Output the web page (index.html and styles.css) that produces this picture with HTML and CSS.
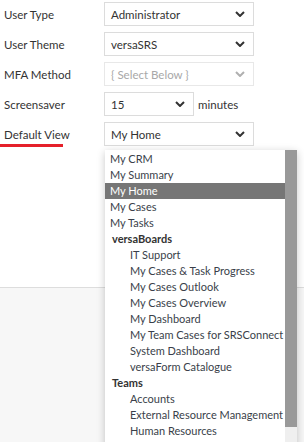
FILE: index.html
```html
<!DOCTYPE html>
<html lang="en">
<head>
  <meta charset="UTF-8">
  <meta name="viewport" content="width=device-width, initial-scale=1.0">
  <title>User Settings</title>
  <link rel="stylesheet" href="styles.css">
</head>
<body>
  <div class="panel">
    <div class="row">
      <label class="lbl">User Type</label>
      <div class="sel">Administrator<svg class="chev" viewBox="0 0 10 6"><path d="M1 1l4 4 4-4"/></svg></div>
    </div>
    <div class="row">
      <label class="lbl">User Theme</label>
      <div class="sel">versaSRS<svg class="chev" viewBox="0 0 10 6"><path d="M1 1l4 4 4-4"/></svg></div>
    </div>
    <div class="row">
      <label class="lbl">MFA Method</label>
      <div class="sel off">{ Select Below }<svg class="chev" viewBox="0 0 10 6"><path d="M1 1l4 4 4-4"/></svg></div>
    </div>
    <div class="row">
      <label class="lbl">Screensaver</label>
      <div class="sel short">15<svg class="chev" viewBox="0 0 10 6"><path d="M1 1l4 4 4-4"/></svg></div>
      <span class="unit">minutes</span>
    </div>
    <div class="row">
      <label class="lbl active">Default View</label>
      <div class="sel">My Home<svg class="chev" viewBox="0 0 10 6"><path d="M1 1l4 4 4-4"/></svg></div>
    </div>
  </div>

  <div class="dropdown">
    <ul class="opts">
      <li>My CRM</li>
      <li>My Summary</li>
      <li class="hl">My Home</li>
      <li>My Cases</li>
      <li>My Tasks</li>
      <li class="grp">versaBoards</li>
      <li class="sub">IT Support</li>
      <li class="sub">My Cases &amp; Task Progress</li>
      <li class="sub">My Cases Outlook</li>
      <li class="sub">My Cases Overview</li>
      <li class="sub">My Dashboard</li>
      <li class="sub">My Team Cases for SRSConnect</li>
      <li class="sub">System Dashboard</li>
      <li class="sub">versaForm Catalogue</li>
      <li class="grp">Teams</li>
      <li class="sub">Accounts</li>
      <li class="sub">External Resource Management</li>
      <li class="sub">Human Resources</li>
    </ul>
    <div class="bar"><div class="thumb"></div></div>
  </div>
</body>
</html>
```

FILE: styles.css
```css
* {
  padding: 0;
  margin: 0;
  box-sizing: border-box;
}
body {
  width: 304px;
  height: 442px;
  overflow: hidden;
  background-color: #F7F7F7;
  font-family: Lato, "Open Sans", sans-serif;
  font-size: 11px;
  color: #333;
  position: relative;
}
.panel {
  height: 288px;
  background-color: #fff;
  border-bottom: 1px solid #DDD;
  padding-top: 2px;
  display: flex;
  flex-direction: column;
  gap: 6px;
}
.row {
  display: flex;
  align-items: center;
  height: 24px;
}
.lbl {
  width: 104px;
  padding-left: 4px;
  font-size: 11.5px;
  position: relative;
}
.lbl.active::after {
  content: "";
  position: absolute;
  left: 0;
  width: 63px;
  bottom: -6px;
  height: 3px;
  background-color: #E5202A;
}
.sel {
  width: 150px;
  height: 24px;
  border: 1px solid #DCDCDC;
  padding: 0 6px;
  display: flex;
  align-items: center;
  justify-content: space-between;
  font-size: 11.5px;
  color: #333;
}
.sel.off {
  border-color: #E8E8E8;
  color: #A8A8A8;
}
.sel.short {
  width: 90px;
}
.chev {
  width: 10px;
  height: 6px;
  fill: none;
  stroke: #333;
  stroke-width: 2;
  margin-right: 2px;
}
.off .chev {
  stroke: #B0B0B0;
}
.unit {
  margin-left: 4px;
  font-size: 11.5px;
}
.dropdown {
  position: absolute;
  left: 105px;
  top: 150px;
  width: 192px;
  height: 300px;
  background-color: #fff;
  box-shadow: 0 2px 8px rgba(0, 0, 0, 0.22);
  display: flex;
}
.opts {
  list-style: none;
  flex: 1;
  min-width: 0;
  overflow: hidden;
  padding-top: 1px;
}
.opts li {
  height: 16px;
  line-height: 16px;
  padding-left: 5px;
  white-space: nowrap;
  color: #3A3F4A;
}
.opts li.hl {
  background-color: #767676;
  color: #fff;
}
.opts li.grp {
  font-weight: 700;
  padding-left: 7px;
  color: #333;
}
.opts li.sub {
  padding-left: 25px;
}
.bar {
  width: 12px;
  flex-shrink: 0;
  background-color: #EFEFEF;
}
.thumb {
  height: 277px;
  background-color: #999;
}
```
